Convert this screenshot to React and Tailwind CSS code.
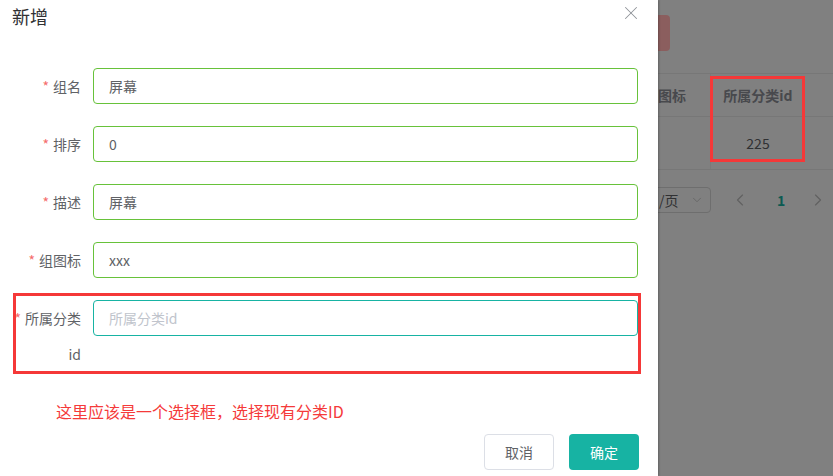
import { X, ChevronDown, ChevronLeft, ChevronRight } from "lucide-react";

const fields = [
  { label: "组名", value: "屏幕" },
  { label: "排序", value: "0" },
  { label: "描述", value: "屏幕" },
  { label: "组图标", value: "xxx" },
];

const FormItem = ({ label, value }) => (
  <div className="flex mb-[22px]">
    <label className="w-[80px] shrink-0 pr-3 text-right text-sm leading-9 text-[#606266]">
      <span className="text-[#f56c6c] mr-1">*</span>
      {label}
    </label>
    <div className="w-[545px] h-9 border border-[#67c23a] rounded flex items-center px-[15px] text-sm text-[#606266]">
      {value}
    </div>
  </div>
);

export default function App() {
  return (
    <div
      className="flex w-[833px] h-[476px] overflow-hidden bg-[#808080]"
      style={{ fontFamily: '"Noto Sans CJK SC", "Liberation Sans", sans-serif' }}
    >
      {/* dialog */}
      <div className="w-[658px] h-full shrink-0 bg-white flex flex-col shadow-[1px_0_2px_rgba(0,0,0,0.25)] z-10">
        <div className="flex items-start justify-between pl-3 pr-[16px] pt-[4px] h-[68px]">
          <span className="text-lg leading-6 text-[#303133]">新增</span>
          <X className="w-[22px] h-[22px] text-[#909399] -mt-[2px]" strokeWidth={1.1} />
        </div>
        <div className="pl-[13px]">
          {fields.map((f) => (
            <FormItem key={f.label} label={f.label} value={f.value} />
          ))}
          <div className="relative flex">
            <div className="pointer-events-none absolute left-0 -top-[7px] w-[628px] h-[81px] border-[3px] border-[#f53838]" />
            <label className="w-[80px] shrink-0 pr-3 text-right text-sm leading-9 text-[#606266]">
              <span className="text-[#f56c6c] mr-1">*</span>
              所属分类id
            </label>
            <div className="w-[545px] h-9 border border-[#17b3a3] rounded flex items-center px-[15px] text-sm text-[#c0c4cc]">
              所属分类id
            </div>
          </div>
          <p className="pl-[43px] mt-[27px] text-base leading-6 text-[#f53a3a]">这里应该是一个选择框，选择现有分类ID</p>
        </div>
        <div className="flex justify-end gap-[15px] pr-[19px] mt-auto mb-[6px]">
          <button className="w-[70px] h-9 rounded border border-[#dcdfe6] text-sm text-[#606266] bg-white">取消</button>
          <button className="w-[70px] h-9 rounded bg-[#17b3a3] text-sm text-white">确定</button>
        </div>
      </div>

      {/* background page under mask */}
      <div className="relative flex-1 flex flex-col text-sm">
        <div className="h-[73px] pt-[15px]">
          <div className="w-[12px] h-9 rounded-r bg-[#8b5e5e]" />
        </div>
        <div className="flex border-t border-b border-[#777] h-[44px] items-center font-bold text-[#48494d]">
          <div className="w-[52px]">图标</div>
          <div className="w-[95px] text-center border-l border-[#7a7a7a] h-full flex items-center justify-center">所属分类id</div>
        </div>
        <div className="flex border-b border-[#777] h-[53px] items-center text-[#303133]">
          <div className="w-[52px] h-full" />
          <div className="w-[95px] text-center border-l border-[#7a7a7a] h-full flex items-center justify-center">225</div>
        </div>
        <div className="flex items-center mt-[17px] h-[26px]">
          <div className="-ml-[4px] w-[57px] h-[26px] border border-[#6e6e6e] rounded flex items-center justify-between pl-[4px] pr-[6px] text-[#303133]">
            /页
            <ChevronDown className="w-[14px] h-[14px] text-[#606060]" strokeWidth={1.3} />
          </div>
          <ChevronLeft className="w-[20px] h-[20px] ml-[19px] text-[#606060]" strokeWidth={1.3} />
          <span className="ml-[27px] font-bold text-[#0c5a52]">1</span>
          <ChevronRight className="w-[20px] h-[20px] ml-[23px] text-[#606060]" strokeWidth={1.3} />
        </div>
        <div className="pointer-events-none absolute left-[52px] top-[76px] w-[95px] h-[86px] border-[3px] border-[#f53838]" />
      </div>
    </div>
  );
}
